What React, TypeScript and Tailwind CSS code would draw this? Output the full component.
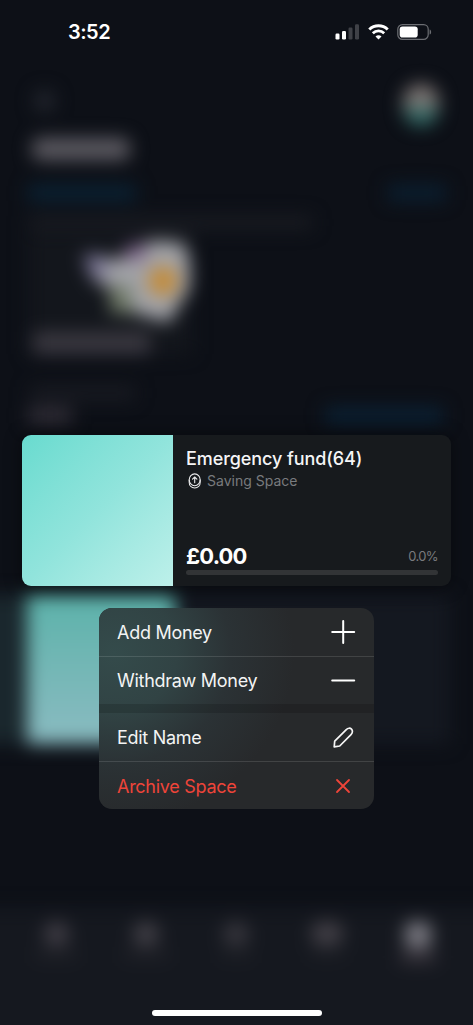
import React from "react";

function StatusBar() {
  return (
    <div className="flex h-[64px] shrink-0 items-center justify-between pl-[68px] pr-[41px]">
      <span className="text-[20px] font-semibold leading-6 tracking-[-0.5px] text-white">3:52</span>
      <div className="flex items-center gap-[8px]">
        <svg width="25" height="16" viewBox="0 0 25 16">
          <rect x="0.5" y="9.500" width="4" height="6" rx="1.2" fill="#fff" />
          <rect x="7" y="7" width="4" height="8.5" rx="1.2" fill="#fff" />
          <rect x="13.5" y="3.500" width="4" height="12" rx="1.2" fill="#3f4147" />
          <rect x="20" y="0.200" width="4" height="15.300" rx="1.2" fill="#3f4147" />
        </svg>
        <svg width="21" height="16" viewBox="0 0 21 16" fill="none">
          <path d="M1.300 5.500C6.400 0.500 14.600 0.500 19.700 5.500" stroke="#fff" strokeWidth="3" />
          <path d="M4.800 9.200C8 6.200 13 6.200 16.200 9.200" stroke="#fff" strokeWidth="2.800" />
          <path d="M10.500 15.500L7.500 12.400C9.200 10.900 11.800 10.900 13.500 12.400Z" fill="#fff" />
        </svg>
        <svg width="35" height="16" viewBox="0 0 35 16" fill="none">
          <rect x="0.800" y="0.700" width="30.400" height="14.600" rx="4.600" stroke="#6c6e73" strokeWidth="1.200" />
          <rect x="2.700" y="2.500" width="18" height="11" rx="2.800" fill="#fff" />
          <path d="M32.600 5.400C34.600 6 34.600 10 32.600 10.600Z" fill="#6c6e73" />
        </svg>
      </div>
    </div>
  );
}

function BlurredPage() {
  return (
    <div className="absolute inset-0 overflow-hidden bg-[#0d1017]" aria-hidden="true">
      <div className="flex h-[1065px] w-full flex-col blur-[9px]">
        <div className="flex h-[134px] shrink-0 items-start justify-between pl-[34px] pr-[34px] pt-[84px]">
          <div className="mt-[6px] h-[22px] w-[21px] rounded-full bg-[#23262e]" />
          <div className="h-[42px] w-[36px] overflow-hidden rounded-full">
            <div className="h-[24px] bg-[#7c7573]" />
            <div className="h-[18px] bg-[#336b67]" />
          </div>
        </div>
        <div className="ml-[32px] mt-[4px] h-[22px] w-[98px] shrink-0 rounded-lg bg-[#5d5b62]" />
        <div className="mt-[25px] flex shrink-0 justify-between pl-[28px] pr-[27px]">
          <div className="h-[16px] w-[108px] bg-[#0a2234]" />
          <div className="h-[16px] w-[58px] bg-[#0a1f31]" />
        </div>
        <div className="ml-[28px] mt-[15px] h-[13px] w-[284px] shrink-0 bg-[#1a1c22]" />
        <div className="ml-[28px] mt-[4px] flex h-[121px] w-[164px] shrink-0 flex-col justify-end bg-[#13161c]">
          <svg className="overflow-visible" width="164" height="93" viewBox="28 239 164 93">
            <path d="M85 255L122 260L132 251L153 240L184 243L190 262L190 288L177 308L169 323L145 316L113 309L112 291L92 278Z" fill="#a2a3a8" />
            <path d="M83 254L104 256L109 278L91 277Z" fill="#7d7898" />
            <path d="M120 252L138 242L149 252L138 263Z" fill="#7a6087" />
            <path d="M110 286L129 284L135 313L110 313Z" fill="#717b69" />
            <circle cx="163" cy="281" r="15" fill="#c48c39" />
          </svg>
          <div className="ml-[5px] h-[22px] w-[117px] shrink-0 bg-[#3b3941]" />
        </div>
        <div className="ml-[30px] mt-[32px] h-[14px] w-[105px] shrink-0 bg-[#191b22]" />
        <div className="mt-[7px] flex shrink-0 justify-between pl-[28px] pr-[30px]">
          <div className="h-[17px] w-[44px] bg-[#302d36]" />
          <div className="h-[17px] w-[118px] bg-[#0a2033]" />
        </div>
        <div className="-ml-[30px] mt-[171px] flex h-[149px] w-[533px] shrink-0">
          <div className="w-[57px] bg-[#1a272d]" />
          <div className="w-[148px] bg-linear-to-b from-[#5bb2aa] to-[#8abbc1]" />
          <div className="w-[275px] bg-[#141820]" />
        </div>
        <div className="-ml-[30px] mt-auto flex h-[157px] w-[533px] shrink-0 items-start bg-[#15181f] pl-[30px] pt-[14px]">
          <div className="flex w-[112px] flex-col items-center gap-[5px]">
            <div className="h-[24px] w-[25px] rounded-full bg-[#413e46]" />
            <div className="h-[8px] w-[44px] bg-[#222329]" />
          </div>
          <div className="flex w-[68px] flex-col items-center gap-[5px]">
            <div className="h-[24px] w-[26px] rounded-full bg-[#424047]" />
            <div className="h-[8px] w-[48px] bg-[#222329]" />
          </div>
          <div className="flex w-[112px] flex-col items-center gap-[5px]">
            <div className="h-[24px] w-[26px] rounded-full bg-[#37363d]" />
            <div className="h-[8px] w-[36px] bg-[#1e2026]" />
          </div>
          <div className="flex w-[70px] flex-col items-center gap-[5px]">
            <div className="h-[23px] w-[32px] rounded-full bg-[#434047]" />
            <div className="h-[8px] w-[38px] bg-[#1e2026]" />
          </div>
          <div className="flex w-[111px] flex-col items-center gap-[3px]">
            <div className="h-[26px] w-[26px] rounded-lg bg-[#7d7c84]" />
            <div className="h-[12px] w-[36px] bg-[#37333b]" />
          </div>
        </div>
      </div>
    </div>
  );
}

function SpaceCard() {
  return (
    <section className="mx-[22px] mt-[371px] flex h-[151px] w-[429px] shrink-0 overflow-hidden rounded-[9px] bg-[#171a1d] shadow-[0_0_18px_rgba(0,0,0,0.45)]">
      <div className="w-[151px] shrink-0 bg-linear-to-br from-[#68dbcf] via-[#91e4dc] to-[#bdf0ea]" />
      <div className="flex flex-1 flex-col pb-[11px] pl-[13px] pr-[13px] pt-[13px]">
        <h1 className="whitespace-nowrap text-[18px] font-medium leading-[22px] tracking-[-0.08px] text-[#f5f5f6]">
          Emergency fund(64)
        </h1>
        <div className="mt-[2px] flex items-center gap-[5px]">
          <svg width="16" height="16" viewBox="0 0 16 16" fill="none" stroke="#e9e9ea" strokeWidth="1.100" strokeLinecap="round" strokeLinejoin="round">
            <ellipse cx="8.700" cy="6.800" rx="5.500" ry="5.900" />
            <path d="M3.200 7V9.300C3.200 12.700 5.500 15 8.700 15S14.200 12.700 14.200 9.300V7" />
            <path d="M8.700 9.700V4.200M6.500 6.200L8.700 4L10.900 6.200" />
          </svg>
          <span className="text-[14px] leading-[17px] text-[#797b7e]">Saving Space</span>
        </div>
        <div className="mt-auto flex items-center justify-between">
          <span className="text-[22px] font-bold leading-[26px] tracking-[-0.8px] text-white">£0.00</span>
          <span className="text-[13px] leading-4 tracking-[-0.6px] text-[#797b7e]">0.0%</span>
        </div>
        <div className="mt-[1px] h-[5px] rounded-full bg-[#323436]" />
      </div>
    </section>
  );
}

function MenuRow({ label, danger, children }: { label: string; danger?: boolean; children: React.ReactNode }) {
  return (
    <button className="flex h-[48px] w-full items-center justify-between pl-[18px] pr-[18px] text-left">
      <span className={danger ? "pt-[2px] text-[18px] leading-6 tracking-[-0.28px] text-[#ee4439]" : "pt-[2px] text-[18px] leading-6 tracking-[-0.28px] text-[#f3f4f4]"}>{label}</span>
      {children}
    </button>
  );
}

function ContextMenu() {
  return (
    <div className="ml-[99px] mt-[22px] h-[201px] w-[275px] shrink-0 overflow-hidden rounded-[13px] bg-[#27292b]">
      <div className="h-full bg-[radial-gradient(ellipse_180px_170px_at_15px_45px,#344b4b_0%,#314344_35%,#2b3235_65%,rgba(39,41,43,0)_100%)]">
        <MenuRow label="Add Money">
          <svg width="26" height="26" viewBox="0 0 26 26" stroke="#fff" strokeWidth="2" strokeLinecap="round">
            <path d="M2.200 13H24.200M13.200 2V24" />
          </svg>
        </MenuRow>
        <div className="-mb-px h-px bg-white/12" />
        <MenuRow label="Withdraw Money">
          <svg width="26" height="26" viewBox="0 0 26 26" stroke="#fff" strokeWidth="2" strokeLinecap="round">
            <path d="M2.200 13.400H24.200" />
          </svg>
        </MenuRow>
        <div className="h-[9px] bg-black/15" />
        <MenuRow label="Edit Name">
          <svg width="26" height="26" viewBox="0 0 26 26" fill="none" stroke="#f6f6f6" strokeWidth="1.700" strokeLinejoin="round">
            <path d="M4.700 17.200L16.300 5.600C18 3.900 20.200 3.800 21.500 5.100C22.900 6.500 22.700 9 21 10.700L9.700 22L4.200 22.800Z" />
          </svg>
        </MenuRow>
        <div className="h-px bg-white/12" />
        <MenuRow label="Archive Space" danger>
          <svg width="26" height="26" viewBox="0 0 26 26" stroke="#ee4439" strokeWidth="1.800" strokeLinecap="round">
            <path d="M7 7L19 19M19 7L7 19" />
          </svg>
        </MenuRow>
      </div>
    </div>
  );
}

export default function App() {
  return (
    <main className="relative h-[1025px] w-[473px] overflow-hidden bg-[#0d1017] font-['Inter',sans-serif]">
      <BlurredPage />
      <div className="relative flex h-full flex-col">
        <StatusBar />
        <SpaceCard />
        <ContextMenu />
        <div className="mx-auto mb-[9px] mt-auto h-[6px] w-[170px] shrink-0 rounded-full bg-white" />
      </div>
    </main>
  );
}
